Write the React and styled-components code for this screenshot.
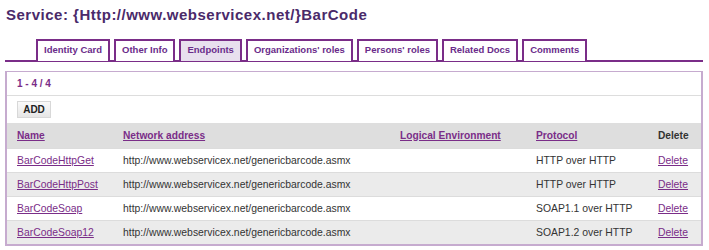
import React from 'react';
import styled, { createGlobalStyle } from 'styled-components';

const GlobalStyle = createGlobalStyle`
    body {
        margin: 0;
        background: #ffffff;
        font-family: "Liberation Sans", Arial, sans-serif;
    }
`;

const Page = styled.div`
    width: 709px;
    height: 250px;
    padding: 0 6px 0 5px;
    box-sizing: border-box;
    overflow: hidden;
`;

const Title = styled.h1`
    margin: 0;
    padding: 6px 0 0 1px;
    font-size: 15px;
    line-height: 17px;
    font-weight: bold;
    letter-spacing: 0.5px;
    color: #4a2a6a;
`;

const TabBar = styled.ul`
    display: flex;
    gap: 4px;
    list-style: none;
    margin: 16px 0 0;
    padding: 0 0 0 31px;
    border-bottom: 2px solid #7a2d88;
    height: 21px;
`;

const Tab = styled.li`
    box-sizing: border-box;
    height: 22px;
    padding: 0 6px;
    border: 2px solid #7a2d88;
    border-bottom: none;
    background: ${(p) => (p.active ? '#e8e0ee' : '#ffffff')};
    color: #6a2c8a;
    font-size: 9.5px;
    font-weight: bold;
    line-height: 18px;
    white-space: nowrap;
`;

const Panel = styled.div`
    margin-top: 9px;
    border: 2px solid #c6abcf;
    border-top-width: 1px;
`;

const Counter = styled.div`
    height: 23px;
    padding: 0 0 0 10px;
    font-size: 10px;
    font-weight: bold;
    line-height: 24px;
    color: #7a2d88;
    border-bottom: 1px solid #dddddd;
`;

const Toolbar = styled.div`
    padding: 5px 10px 5px;
`;

const Button = styled.button`
    display: block;
    height: 17px;
    width: 34px;
    padding: 0;
    border: 1px solid #d8d8d8;
    background: linear-gradient(#fafafa, #e6e6e6);
    font-family: "Liberation Sans", Arial, sans-serif;
    font-size: 10px;
    font-weight: bold;
    color: #222222;
`;

const Table = styled.table`
    width: 100%;
    border-collapse: collapse;
    font-size: 10.4px;
`;

const HeadRow = styled.tr`
    background: #dedede;
    height: 25px;
`;

const HeadCell = styled.th`
    text-align: left;
    font-weight: bold;
    font-size: 10.2px;
    padding: 0 0 0 10px;
    color: #333333;
`;

const Row = styled.tr`
    height: 24px;
    background: ${(p) => (p.shaded ? '#ebebeb' : '#ffffff')};
    border-top: 1px solid #dcdcdc;
`;

const Cell = styled.td`
    padding: 0 0 0 10px;
    color: #333333;
    white-space: nowrap;
`;

const Link = styled.a`
    color: #7a2d88;
    text-decoration: underline;
    font-weight: ${(p) => (p.bold ? 'bold' : 'normal')};
`;

const tabs = [
    'Identity Card',
    'Other Info',
    'Endpoints',
    "Organizations' roles",
    "Persons' roles",
    'Related Docs',
    'Comments',
];

const endpoints = [
    { name: 'BarCodeHttpGet', protocol: 'HTTP over HTTP' },
    { name: 'BarCodeHttpPost', protocol: 'HTTP over HTTP' },
    { name: 'BarCodeSoap', protocol: 'SOAP1.1 over HTTP' },
    { name: 'BarCodeSoap12', protocol: 'SOAP1.2 over HTTP' },
];

const App = () => {
    return (
        <Page>
            <GlobalStyle />
            <Title>Service: {'{'}Http://www.webservicex.net/{'}'}BarCode</Title>
            <TabBar>
                {tabs.map((t) => (
                    <Tab key={t} active={t === 'Endpoints'}>{t}</Tab>
                ))}
            </TabBar>
            <Panel>
                <Counter>1 - 4 / 4</Counter>
                <Toolbar>
                    <Button>ADD</Button>
                </Toolbar>
                <Table>
                    <colgroup>
                        <col style={{ width: '106px' }} />
                        <col style={{ width: '277px' }} />
                        <col style={{ width: '136px' }} />
                        <col style={{ width: '122px' }} />
                        <col />
                    </colgroup>
                    <thead>
                        <HeadRow>
                            <HeadCell><Link bold href="#">Name</Link></HeadCell>
                            <HeadCell><Link bold href="#">Network address</Link></HeadCell>
                            <HeadCell><Link bold href="#">Logical Environment</Link></HeadCell>
                            <HeadCell><Link bold href="#">Protocol</Link></HeadCell>
                            <HeadCell>Delete</HeadCell>
                        </HeadRow>
                    </thead>
                    <tbody>
                        {endpoints.map((e, i) => (
                            <Row key={e.name} shaded={i % 2 === 1}>
                                <Cell><Link href="#">{e.name}</Link></Cell>
                                <Cell>http://www.webservicex.net/genericbarcode.asmx</Cell>
                                <Cell></Cell>
                                <Cell>{e.protocol}</Cell>
                                <Cell><Link href="#">Delete</Link></Cell>
                            </Row>
                        ))}
                    </tbody>
                </Table>
            </Panel>
        </Page>
    );
};

export default App;
